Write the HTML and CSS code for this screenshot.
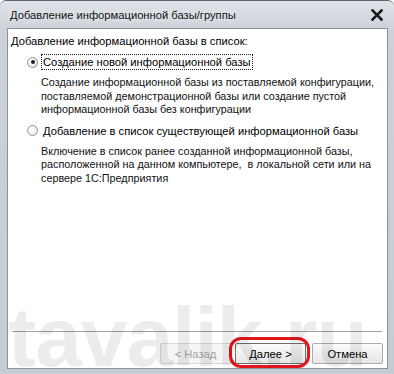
FILE: index.html
```html
<!DOCTYPE html>
<html lang="ru">
<head>
    <meta charset="UTF-8">
    <title>Добавление информационной базы/группы</title>
    <link rel="stylesheet" href="styles.css">
</head>
<body>
    <div class="window">
        <div class="titlebar">
            <span class="title">Добавление информационной базы/группы</span>
            <span class="close">
                <svg width="12" height="12" viewBox="0 0 12 12">
                    <path d="M1.5 1.5 L10.5 10.5 M10.5 1.5 L1.5 10.5" stroke="#1a1a1a" stroke-width="2.6" stroke-linecap="square"/>
                </svg>
            </span>
        </div>
        <div class="client">
            <div class="heading">Добавление информационной базы в список:</div>

            <div class="option">
                <div class="radio-row">
                    <span class="radio checked"></span>
                    <span class="label focused">Создание новой информационной базы</span>
                </div>
                <div class="desc">
                    Создание информационной базы из поставляемой конфигурации,<br>
                    поставляемой демонстрационной базы или создание пустой<br>
                    информационной базы без конфигурации
                </div>
            </div>

            <div class="option">
                <div class="radio-row">
                    <span class="radio"></span>
                    <span class="label">Добавление в список существующей информационной базы</span>
                </div>
                <div class="desc">
                    Включение в список ранее созданной информационной базы,<br>
                    расположенной на данном компьютере,&nbsp; в локальной сети или на<br>
                    сервере 1С:Предприятия
                </div>
            </div>

            <div class="spacer"></div>
            <div class="separator"></div>
            <div class="buttons">
                <button class="btn" disabled>&lt; Назад</button>
                <button class="btn default">Далее &gt;</button>
                <button class="btn cancel">Отмена</button>
            </div>
        </div>
        <div class="watermark">tavalik.ru</div>
    </div>
</body>
</html>
```

FILE: styles.css
```css
body {
    margin: 0;
    padding: 0;
    background: #ffffff;
    font-family: 'Liberation Sans', Arial, sans-serif;
    font-size: 10.8px;
    color: #000;
}

.window {
    position: relative;
    width: 394px;
    height: 374px;
    box-sizing: border-box;
    padding: 0 6px 5px 7px;
    display: flex;
    flex-direction: column;
    background: linear-gradient(to bottom, #dfe3e8 0px, #cdd2d9 28px, #c6ccd3 100%);
    border-top: 1px solid #5e646c;
    border-radius: 6px 6px 0 0;
    overflow: hidden;
}

.titlebar {
    height: 27px;
    display: flex;
    align-items: center;
    justify-content: space-between;
    padding: 0 4px 0 3px;
}

.title {
    font-size: 11.2px;
    color: #111;
    text-shadow: 0 0 6px rgba(255, 255, 255, 0.9);
}

.close {
    display: flex;
    margin-right: 1px;
}

.client {
    flex: 1;
    display: flex;
    flex-direction: column;
    background: #ffffff;
    border: 1px solid #8d939b;
    padding: 5px 4px 4px 3px;
    white-space: nowrap;
}

.heading {
    font-size: 11.2px;
    line-height: 14px;
}

.option {
    margin-top: 6px;
}

.radio-row {
    display: flex;
    align-items: center;
    margin-left: 16px;
    height: 16px;
}

.radio {
    width: 11px;
    height: 11px;
    box-sizing: border-box;
    border-radius: 50%;
    border: 1px solid #8f9397;
    background: radial-gradient(circle at 40% 35%, #ffffff 0%, #f0f0f0 55%, #d8d8d8 100%);
    margin-right: 3px;
    position: relative;
}

.radio.checked::after {
    content: "";
    position: absolute;
    left: 2.5px;
    top: 2.5px;
    width: 4px;
    height: 4px;
    border-radius: 50%;
    background: #1f1f1f;
}

.label {
    font-size: 11.2px;
    padding: 0 1px;
    line-height: 14px;
    border: 1px dotted transparent;
}

.label.focused {
    border-color: #222;
}

.desc {
    margin: 6px 0 0 30px;
    line-height: 13.5px;
    color: #111;
}

.spacer {
    flex: 1;
}

.separator {
    height: 0;
    border-top: 1px solid #a0a0a0;
    margin: 0 1px 11px 1px;
}

.buttons {
    display: flex;
    justify-content: flex-end;
    gap: 4px;
}

.btn {
    width: 71px;
    height: 21px;
    font-family: 'Liberation Sans', Arial, sans-serif;
    font-size: 11.2px;
    color: #000;
    background: linear-gradient(to bottom, #fbfbfb 0%, #f0f0f0 50%, #e6e6e6 100%);
    border: 1px solid #acacac;
    border-radius: 2px;
    padding: 0;
}

.btn:disabled {
    color: #a3a3a3;
    background: #f5f5f5;
    border-color: #d9d9d9;
}

.btn.default {
    position: relative;
    border-color: #6f6f6f;
}

.btn.default::after {
    content: "";
    position: absolute;
    left: -7px;
    right: -5px;
    top: -7px;
    bottom: -5px;
    border: 3px solid #e3161c;
    border-radius: 12px;
}

.btn.cancel {
    margin-left: 2px;
}

.watermark {
    position: absolute;
    left: 8px;
    top: 288px;
    font-size: 84px;
    font-weight: bold;
    letter-spacing: -1px;
    color: rgba(0, 0, 0, 0.075);
    pointer-events: none;
    user-select: none;
}
```
